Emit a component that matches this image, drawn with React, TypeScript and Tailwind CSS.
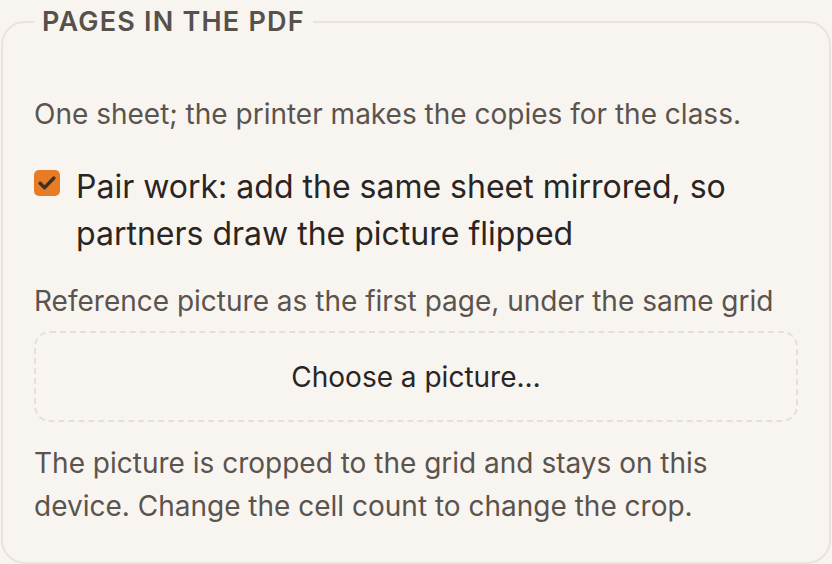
export default function App() {
  return (
    <div className="min-h-screen bg-[#f8f5f1] px-[1px] pt-[2px] font-['Inter',sans-serif]">
      <fieldset className="rounded-[24px] border-2 border-[#e8e3dd] px-[31px] pb-[34px] pt-[53px]">
        <legend className="px-[8px] text-[27px] leading-[40px] font-semibold uppercase tracking-[0.045em] text-[#57504b]">
          Pages in the PDF
        </legend>

        <p className="text-[28px] leading-[39px] text-[#5b534d]">
          One sheet; the printer makes the copies for the class.
        </p>

        <label className="mt-[29px] flex items-start gap-[16px] text-[32px] leading-[47px] text-[#2a2522]">
          <span className="mt-[7px] flex h-[26px] w-[26px] shrink-0 items-center justify-center rounded-[5px] bg-[#e67d26]">
            <svg viewBox="0 0 16 16" className="h-[22px] w-[22px]" fill="none">
              <path d="M3 8.2 6.3 11.4 13 4.4" stroke="#3b312a" strokeWidth="2.5" strokeLinecap="round" strokeLinejoin="round" />
            </svg>
          </span>
          <span>Pair work: add the same sheet mirrored, so partners draw the picture flipped</span>
        </label>

        <p className="mt-[25px] text-[28px] leading-[39px] text-[#5b534d]">
          Reference picture as the first page, under the same grid
        </p>

        <button className="mt-[10px] flex h-[91px] w-full items-center justify-center rounded-[16px] border-2 border-dashed border-[#e4dfd9] text-[28px] text-[#2a2522]">
          Choose a picture…
        </button>

        <p className="mt-[20px] text-[28px] leading-[43px] text-[#5b534d]">
          The picture is cropped to the grid and stays on this device. Change the cell count to change the crop.
        </p>
      </fieldset>
    </div>
  );
}
